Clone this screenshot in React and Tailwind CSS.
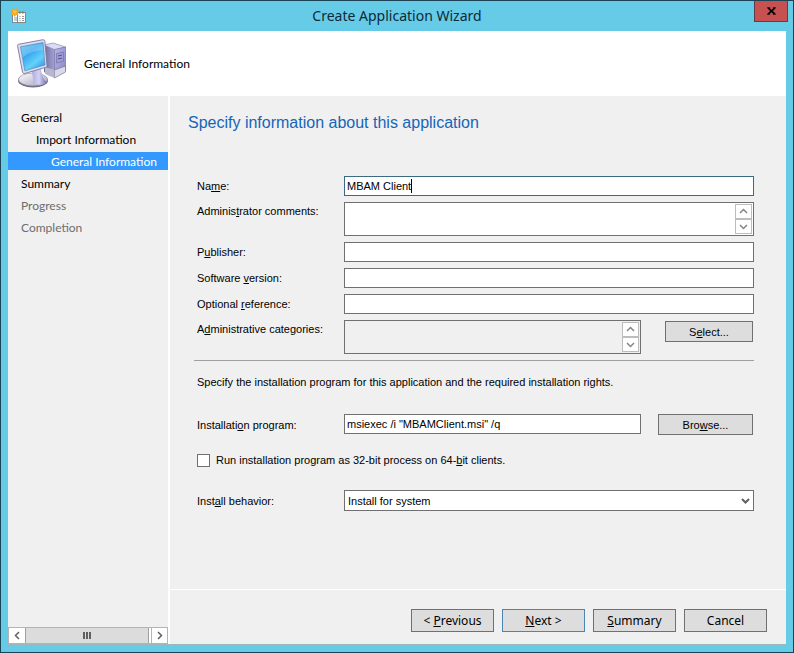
import { useState } from 'react';

const steps = [
  { label: 'General', style: 'pt-[2px] pl-[13px] text-black' },
  { label: 'Import Information', style: 'pt-[2px] pl-7 text-black' },
  { label: 'General Information', style: 'pt-[2px] pl-[43px] bg-[#3399ff] text-white', current: true },
  { label: 'Summary', style: 'pt-[2px] pl-[13px] text-black' },
  { label: 'Progress', style: 'pt-[2px] pl-[13px] text-[#6d6d6d]' },
  { label: 'Completion', style: 'pt-[2px] pl-[13px] text-[#6d6d6d]' },
];

const buttonStyle = 'border border-[#707070] bg-[#dddddd] text-black hover:bg-[#e8f1f8]';
const fieldStyle = 'h-5 w-full min-w-0 border border-[#707070] bg-white px-[2px] outline-none';

const AppIcon = () => (
  <svg width="16" height="16" viewBox="0 0 16 16" aria-hidden="true">
    <rect x="1.5" y="5.5" width="7" height="9" fill="#fff" stroke="#7b8a94" />
    <rect x="3" y="9" width="3" height="4" fill="#b9d3e4" />
    <rect x="6.5" y="4.5" width="8" height="10" fill="#fdfbf5" stroke="#8a8578" />
    <path d="M8 3.5h1.5v2H8zM11 3.5h1.5v2H11z" fill="#7a7464" />
    <path
      d="M8.5 8.5h1M11 8.5h2M8.5 10.5h1M11 10.5h2M8.5 12.5h1M11 12.5h2"
      stroke="#8e9aa5"
      fill="none"
    />
    <path
      d="M1.5 .5L3.5 1.2 5.5 .3 6.5 2 8 3.5 6.8 5 7 7 5 7 3.8 9 2.5 7 .5 7 .8 5 0 3.5 1 2.2z"
      fill="#f2a623"
    />
    <circle cx="3.8" cy="3.8" r="1.9" fill="#ffbe3c" />
  </svg>
);

const ComputerIcon = () => (
  <svg width="50" height="50" viewBox="0 0 50 50" aria-hidden="true">
    <defs>
      <linearGradient id="screen" x1="0" y1="0" x2="0.7" y2="1">
        <stop offset="0" stopColor="#6cc6f4" />
        <stop offset="0.4" stopColor="#36a5ee" />
        <stop offset="0.75" stopColor="#63d2fb" />
        <stop offset="1" stopColor="#3f9ae8" />
      </linearGradient>
      <linearGradient id="towerFront" x1="0" y1="0" x2="1" y2="1">
        <stop offset="0" stopColor="#b9b7ea" />
        <stop offset="1" stopColor="#8583c2" />
      </linearGradient>
      <linearGradient id="towerSide" x1="0" y1="0" x2="1" y2="0">
        <stop offset="0" stopColor="#6f6c9f" />
        <stop offset="1" stopColor="#a4a2d3" />
      </linearGradient>
      <linearGradient id="stand" x1="0" y1="0" x2="1" y2="0">
        <stop offset="0" stopColor="#a9a7dc" />
        <stop offset="0.5" stopColor="#d4d2f5" />
        <stop offset="1" stopColor="#6f6daa" />
      </linearGradient>
      <linearGradient id="base" x1="0" y1="0" x2="1" y2="1">
        <stop offset="0" stopColor="#ffffff" />
        <stop offset="1" stopColor="#a2a1bd" />
      </linearGradient>
    </defs>
    <path d="M27 6l9-2 12.5 4-10 3z" fill="#dddcf6" stroke="#8c8bb5" strokeWidth="0.7" />
    <path d="M27 6l10.5 4.5V38L27 33z" fill="url(#towerSide)" />
    <path
      d="M37.5 10.5l11-2.5v23l-11 7z"
      fill="url(#towerFront)"
      stroke="#72709f"
      strokeWidth="0.7"
    />
    <path d="M37.5 31l11-4v6l-11 6z" fill="#dad9e8" stroke="#77758f" strokeWidth="0.7" />
    <path d="M28 28l9.5 3v8L28 35z" fill="#b9b7cd" />
    <path d="M39.5 14.5l7-1.5v9l-7 2z" fill="#a09ed8" stroke="#6b69a4" strokeWidth="0.6" />
    <path d="M41 17l4-1M41 20l4-1" stroke="#4f4c88" strokeWidth="1" fill="none" />
    <ellipse cx="16" cy="41.5" rx="15" ry="7" fill="#6d6c82" />
    <ellipse
      cx="16"
      cy="40.5"
      rx="14.5"
      ry="6.4"
      fill="url(#base)"
      stroke="#8a899f"
      strokeWidth="0.6"
    />
    <path d="M14 30l10-2.5c0 6 1 11.5 6 16-3 3-9 2.5-14 1 1-4-1-10-2-14.5z" fill="url(#stand)" />
    <path
      d="M1.8 5.2L25.5.8c1.4-.2 2.2.2 2.4 1.4L30 26.5c0 1.1-.4 1.6-1.4 1.9L7.8 34.5c-1.4.3-2-.1-2.3-1.4L.6 7.2C.4 6 .7 5.4 1.8 5.2z"
      fill="#dcdcec"
      stroke="#77789a"
      strokeWidth="0.9"
    />
    <path
      d="M3.5 7.8l22.5-4.3 2 22.5L7.8 31.8z"
      fill="url(#screen)"
      stroke="#4a7fb8"
      strokeWidth="0.6"
    />
    <path d="M4 8.2l21.5-4 .5 7C17 11.5 10 14 5.8 19z" fill="#a9dcf8" opacity="0.4" />
  </svg>
);

const Chevron = ({ d, size = 9, width = 1.5, color = '#606060' }) => (
  <svg
    width={size}
    height={size}
    viewBox="0 0 9 9"
    fill="none"
    stroke={color}
    strokeWidth={width}
    aria-hidden="true"
  >
    <path d={d} />
  </svg>
);

const UP = 'M1 6l3.5-3.5L8 6';
const DOWN = 'M1 3l3.5 3.5L8 3';
const LEFT = 'M6 1L2.5 4.5L6 8';
const RIGHT = 'M3 1l3.5 3.5L3 8';

// Text with one underlined access key, written as "Na&me:"
const Mnemonic = ({ text }) => {
  const at = text.indexOf('&');
  if (at === -1) {
    return text;
  }
  return (
    <>
      {text.slice(0, at)}
      <u className="underline-offset-1">{text[at + 1]}</u>
      {text.slice(at + 2)}
    </>
  );
};

const Row = ({ id, label, top, children }) => (
  <div className="flex">
    <label
      htmlFor={id}
      className={top ? 'w-[150px] shrink-0 pl-[3px] pt-px' : 'w-[150px] shrink-0 self-center pl-[3px]'}
    >
      <Mnemonic text={label} />
    </label>
    <div className="flex min-w-0 flex-1">{children}</div>
  </div>
);

const ScrollBox = ({ id, readOnly, value, onChange }) => (
  <div
    className={
      readOnly
        ? 'flex h-[34px] min-w-0 flex-1 border border-[#707070] bg-[#f0f0f0] p-px'
        : 'flex h-[34px] min-w-0 flex-1 border border-[#707070] bg-white p-px'
    }
  >
    <textarea
      id={id}
      readOnly={readOnly}
      value={value}
      onChange={onChange}
      className="min-w-0 flex-1 resize-none bg-transparent px-px outline-none"
    />
    <div className="flex w-[17px] flex-col">
      <button
        type="button"
        aria-label="Scroll up"
        className="flex flex-1 items-center justify-center border border-[#bdbdbd] bg-white"
      >
        <Chevron d={UP} color="#858585" />
      </button>
      <button
        type="button"
        aria-label="Scroll down"
        className="flex flex-1 items-center justify-center border border-[#bdbdbd] bg-white"
      >
        <Chevron d={DOWN} color="#858585" />
      </button>
    </div>
  </div>
);

const Sidebar = () => (
  <nav className="flex w-40 shrink-0 flex-col justify-between">
    <ul className="flex flex-col gap-1 pt-3 font-['Lato',sans-serif] text-[12px] leading-4">
      {steps.map((step) => (
        <li key={step.label} className={step.style} aria-current={step.current ? 'step' : undefined}>
          {step.label}
        </li>
      ))}
    </ul>
    <div className="flex h-[17px] border border-[#b4b4b4] bg-white">
      <button type="button" aria-label="Scroll left" className="flex w-4 items-center justify-center">
        <Chevron d={LEFT} />
      </button>
      <div className="flex flex-1 items-center justify-center gap-px border-x border-[#a0a0a0] bg-[#dcdcdc]">
        <span className="h-[7px] w-[2px] bg-[#606060]" />
        <span className="h-[7px] w-[2px] bg-[#606060]" />
        <span className="h-[7px] w-[2px] bg-[#606060]" />
      </div>
      <button
        type="button"
        aria-label="Scroll right"
        className="ml-[2px] flex w-4 items-center justify-center border-l border-[#b4b4b4]"
      >
        <Chevron d={RIGHT} />
      </button>
    </div>
  </nav>
);

const App = () => {
  const [form, setForm] = useState({
    name: 'MBAM Client',
    comments: '',
    publisher: '',
    version: '',
    reference: '',
    program: 'msiexec /i "MBAMClient.msi" /q',
    run32: false,
    behavior: 'Install for system',
  });

  const handleChange = (key) => (e) => setForm({ ...form, [key]: e.target.value });

  return (
    <div className="flex min-h-screen flex-col border border-[#1c4354] bg-[#66cbe7] px-[7px] pb-[7px] font-['Noto_Sans',sans-serif] text-[12px] text-black">
      <header className="grid h-[30px] grid-cols-[1fr_auto_1fr] items-start">
        <div className="pl-[3px] pt-[7px]">
          <AppIcon />
        </div>
        <h1 className="pt-1 text-[14px] leading-[22px] text-[#0c2a38]">Create Application Wizard</h1>
        <button
          type="button"
          aria-label="Close"
          className="-mr-[2px] flex h-[21px] w-[34px] items-center justify-center justify-self-end border border-t-0 border-[#5c3f48] bg-[#c75050]"
        >
          <svg width="9" height="8" viewBox="0 0 10 8" aria-hidden="true">
            <path d="M1.5 0.8L8.5 7.2M8.5 0.8L1.5 7.2" stroke="#000" strokeWidth="2" />
            <path d="M0 .5h3.5M6.5 .5H10M0 7.5h3.5M6.5 7.5H10" stroke="#000" />
          </svg>
        </button>
      </header>

      <div className="flex flex-1 flex-col border-b border-[#9fb4bb] bg-[#f0f0f0]">
        <div className="flex h-[65px] items-center bg-white pl-[9px]">
          <ComputerIcon />
          <h2 className="pl-[17px] font-['Lato',sans-serif]">General Information</h2>
        </div>

        <div className="flex flex-1">
          <Sidebar />

          <main className="flex min-w-0 flex-1 flex-col border-l-2 border-white">
            <div className="flex-1 pl-6 pr-8 font-['Liberation_Sans',sans-serif] text-[11px] leading-4">
              <h3 className="-ml-[6px] pt-4 text-[16px] leading-[22px] text-[#1465b8]">
                Specify information about this application
              </h3>

              <div className="flex flex-col gap-[6px] pt-[42px]">
                <Row id="name" label="Na&me:">
                  <div className="flex h-5 w-full items-center border border-[#3c6a80] bg-white px-[2px]">
                    <input
                      id="name"
                      type="text"
                      value={form.name}
                      onChange={handleChange('name')}
                      className="field-sizing-content bg-transparent outline-none"
                    />
                    <span className="h-[14px] w-px bg-black" />
                  </div>
                </Row>
                <Row id="comments" label="Adminis&trator comments:" top>
                  <ScrollBox id="comments" value={form.comments} onChange={handleChange('comments')} />
                </Row>
                <Row id="publisher" label="P&ublisher:">
                  <input
                    id="publisher"
                    type="text"
                    value={form.publisher}
                    onChange={handleChange('publisher')}
                    className={fieldStyle}
                  />
                </Row>
                <Row id="version" label="Software &version:">
                  <input
                    id="version"
                    type="text"
                    value={form.version}
                    onChange={handleChange('version')}
                    className={fieldStyle}
                  />
                </Row>
                <Row id="reference" label="Optional &reference:">
                  <input
                    id="reference"
                    type="text"
                    value={form.reference}
                    onChange={handleChange('reference')}
                    className={fieldStyle}
                  />
                </Row>
                <Row id="categories" label="A&dministrative categories:" top>
                  <ScrollBox id="categories" value="" readOnly />
                  <button type="button" className={`${buttonStyle} ml-6 mr-px mt-px h-[21px] w-[88px]`}>
                    <Mnemonic text="S&elect..." />
                  </button>
                </Row>
                <hr className="border-t border-[#a0a0a0]" />
              </div>

              <p className="pl-[3px] pt-[13px]">
                Specify the installation program for this application and the required installation
                rights.
              </p>

              <div className="flex flex-col pt-6">
                <Row id="program" label="Installati&on program:">
                  <input
                    id="program"
                    type="text"
                    value={form.program}
                    onChange={handleChange('program')}
                    className={fieldStyle}
                  />
                  <button type="button" className={`${buttonStyle} ml-[17px] mr-px h-[21px] w-[95px] shrink-0`}>
                    <Mnemonic text="Bro&wse..." />
                  </button>
                </Row>
                <label className="flex items-center gap-[6px] self-start pb-[22px] pl-[3px] pt-[17px]">
                  <input
                    type="checkbox"
                    checked={form.run32}
                    onChange={(e) => setForm({ ...form, run32: e.target.checked })}
                    className="size-[13px] appearance-none border border-[#707070] bg-white checked:bg-[#3399ff]"
                  />
                  <span>
                    <Mnemonic text="Run installation program as 32-bit process on 64-&bit clients." />
                  </span>
                </label>
                <Row id="behavior" label="Inst&all behavior:">
                  <div className="relative w-full">
                    <select
                      id="behavior"
                      value={form.behavior}
                      onChange={handleChange('behavior')}
                      className="block h-[21px] w-full appearance-none border border-[#707070] bg-white px-[3px] outline-none"
                    >
                      <option>Install for system</option>
                      <option>Install for user</option>
                    </select>
                    <span className="pointer-events-none absolute inset-y-0 right-1 flex items-center">
                      <Chevron d={DOWN} width={2} />
                    </span>
                  </div>
                </Row>
              </div>
            </div>

            <footer className="flex justify-end gap-2 border-t border-white pb-3 pr-[19px] pt-[19px]">
              <button type="button" className={`${buttonStyle} h-[23px] w-[83px]`}>
                <Mnemonic text="< &Previous" />
              </button>
              <button type="button" className="h-[23px] w-[83px] border border-[#4a86b4] bg-[#dddddd]">
                <Mnemonic text="&Next >" />
              </button>
              <button type="button" className={`${buttonStyle} h-[23px] w-[83px]`}>
                <Mnemonic text="&Summary" />
              </button>
              <button type="button" className={`${buttonStyle} h-[23px] w-[83px]`}>
                Cancel
              </button>
            </footer>
          </main>
        </div>
      </div>
    </div>
  );
};

export default App;
